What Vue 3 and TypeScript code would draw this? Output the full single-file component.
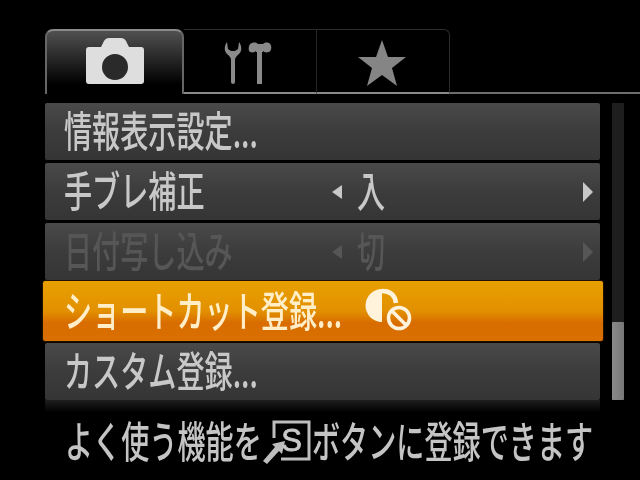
<script setup lang="ts">
interface Row { label: string; value?: string; kind: 'normal' | 'disabled' | 'active' }
const rows: Row[] = [
  { label: '情報表示設定...', kind: 'normal' },
  { label: '手ブレ補正', value: '入', kind: 'normal' },
  { label: '日付写し込み', value: '切', kind: 'disabled' },
  { label: 'ショートカット登録...', kind: 'active' },
  { label: 'カスタム登録...', kind: 'normal' },
]
</script>

<template>
  <div class="screen">
    <div class="tabs">
      <div class="tab first">
        <svg width="58" height="48" viewBox="0 0 58 48">
          <path d="M3 10h12l3-6c1-2 3-3 5-3h12c2 0 4 1 5 3l3 6h12a3 3 0 0 1 3 3v31a3 3 0 0 1-3 3H3a3 3 0 0 1-3-3V13a3 3 0 0 1 3-3z" fill="#dedede"/>
          <circle cx="29" cy="30" r="13" fill="#2a2a2a"/>
        </svg>
      </div>
      <div class="tab second">
        <svg width="52" height="50" viewBox="0 0 52 50">
          <path d="M3 6c-3 4-3 9 0 12 2 2 4 3 4 6v22c0 1 1 2 2 2s2-1 2-2V24c0-3 2-4 4-6 3-3 3-8 0-12l-1 7-3 2H7l-3-2z" fill="#8a8a8a"/>
          <path d="M28 7c3-1 5 0 6 1h5c1-1 3-2 6-1 3 1 3 8 0 9-3 1-5 0-6-1v1h-1v32h-5V16h-1v-1c-1 1-3 2-6 1-2-1-2-8 2-9z" fill="#8a8a8a"/>
        </svg>
      </div>
      <div class="tab third">
        <svg class="star" width="50" height="48" viewBox="0 0 50 48">
          <path d="M25 1l6 17h18L35 29l5 18-15-11-15 11 5-18L1 18h18z" fill="#858585"/>
        </svg>
      </div>
      <div class="tab-rest"></div>
    </div>

    <div class="middle">
      <div class="list">
        <div v-for="row in rows" :key="row.label" class="row" :class="row.kind">
          <div class="label"><span class="narrow">{{ row.label }}</span></div>
          <template v-if="row.value">
            <svg class="arrow" width="10" height="14" viewBox="0 0 10 14"><path d="M10 0v14L0 7z"/></svg>
            <div class="value"><span class="narrow">{{ row.value }}</span></div>
            <svg class="arrow right" width="10" height="20" viewBox="0 0 10 20"><path d="M0 0v20l10-10z"/></svg>
          </template>
          <svg v-if="row.kind === 'active'" class="timer" width="50" height="44" viewBox="0 0 50 44">
            <path d="M17 1a16.500 16.500 0 0 0 0 33z" fill="#fff3dc"/>
            <path d="M17 3c8 0 13 4 14 12" fill="none" stroke="#fff3dc" stroke-width="4.500"/>
            <circle cx="34" cy="30" r="10.500" fill="none" stroke="#fff3dc" stroke-width="3.600"/>
            <path d="M27 23l14 14" stroke="#fff3dc" stroke-width="3.600"/>
          </svg>
        </div>
      </div>
      <div class="scrollbar"><div class="thumb"></div></div>
    </div>

    <div class="reflection"></div>

    <div class="help">
      <div class="help-a"><span class="narrow">よく使う機能を</span></div>
      <svg class="s-icon" width="50" height="46" viewBox="0 0 50 46">
        <path d="M12 20V4h35v37H19" fill="none" stroke="#bdbdbd" stroke-width="3"/>
        <path d="M1 43l12-14-3-3 13-3-3 13-3-3-12 13z" fill="#bdbdbd"/>
        <text x="29.500" y="33" text-anchor="middle" class="s-letter">S</text>
      </svg>
      <div class="help-b"><span class="narrow">ボタンに登録できます</span></div>
    </div>
  </div>
</template>

<style>
html, body { margin: 0; background: #000; }
</style>

<style scoped>
.screen {
  width: 640px;
  height: 480px;
  box-sizing: border-box;
  padding-top: 29px;
  background: #000;
  overflow: hidden;
  font-family: "Noto Sans CJK JP", "Liberation Sans", sans-serif;
  font-weight: 500;
  filter: blur(0.6px);
  color: #c8c8c8;
}
.tabs { display: flex; height: 65px; margin-left: 45px; }
.tab {
  box-sizing: border-box;
  display: flex;
  align-items: flex-start;
  justify-content: center;
  padding-top: 6px;
  border-top: 1px solid #2c2c2c;
  border-bottom: 2px solid #8a8a8a;
}
.first {
  width: 139px;
  border: 2px solid;
  border-color: #8a8a8a #666 transparent;
  border-bottom: 0;
  border-radius: 8px 8px 0 0;
  background: linear-gradient(#505050, #000 85%);
}
.second { width: 133px; border-right: 1px solid #262626; }
.third { width: 133px; border-right: 1px solid #2c2c2c; border-top-right-radius: 6px; }
.star { margin: 3px 2px 0 0; }
.tab-rest {
  flex: 1;
  align-self: flex-end;
  height: 2px;
  background: #6e6e6e;
}
.middle { display: flex; margin-top: 9px; height: 297px; }
.list {
  width: 555px;
  margin-left: 45px;
  display: flex;
  flex-direction: column;
  gap: 3px;
}
.row {
  display: flex;
  align-items: center;
  height: 57px;
  box-sizing: border-box;
  padding-left: 20px;
  background: linear-gradient(#4a4a4a, #3c3c3c 50%, #353535);
  border-radius: 2px;
  font-size: 38px;
  line-height: 57px;
}
.row.active {
  height: 61px;
  margin: -2px -3px -1px -2px;
  padding-left: 22px;
  background: linear-gradient(#e8a000, #e29000 50%, #d86c00 70%, #da7000);
  color: #ffeec8;
  box-shadow: 0 0 2px #7a4000;
  position: relative;
}
.row.disabled { color: #565656; }
.label { width: 267px; flex: none; white-space: nowrap; }
.active .label { width: 300px; }
.narrow {
  display: inline-block;
  white-space: nowrap;
  transform: translate(-1px, -3px) scale(0.74, 1.12);
  transform-origin: left center;
}
.arrow { fill: #c8c8c8; flex: none; }
.disabled .arrow { fill: #565656; }
.right { margin-left: 9px; }
.value { width: 216px; flex: none; margin-left: 16px; }
.timer { flex: none; margin-top: -3px; }
.scrollbar {
  width: 12px;
  margin-left: 12px;
  background: #1e1e1e;
  display: flex;
  align-items: flex-end;
}
.thumb {
  width: 100%;
  height: 78px;
  background: linear-gradient(90deg, #8a8a8a, #777);
  border-radius: 1px;
}
.reflection {
  width: 555px;
  height: 12px;
  margin-left: 45px;
  background: linear-gradient(#1e1e1e, #000);
}
.help {
  display: flex;
  align-items: center;
  margin-left: 65px;
  margin-top: 4px;
  font-size: 38px;
  line-height: 50px;
  color: #c4c4c4;
}
.help .narrow { transform: translate(0, -1px) scale(0.74, 1.14); }
.help-a { width: 197px; flex: none; }
.s-icon { flex: none; }
.help-b { flex: none; }
.s-letter {
  font-family: "Liberation Sans", sans-serif;
  font-size: 31px;
  stroke: #c8c8c8;
  stroke-width: 0.8px;
  fill: #c8c8c8;
}
</style>
